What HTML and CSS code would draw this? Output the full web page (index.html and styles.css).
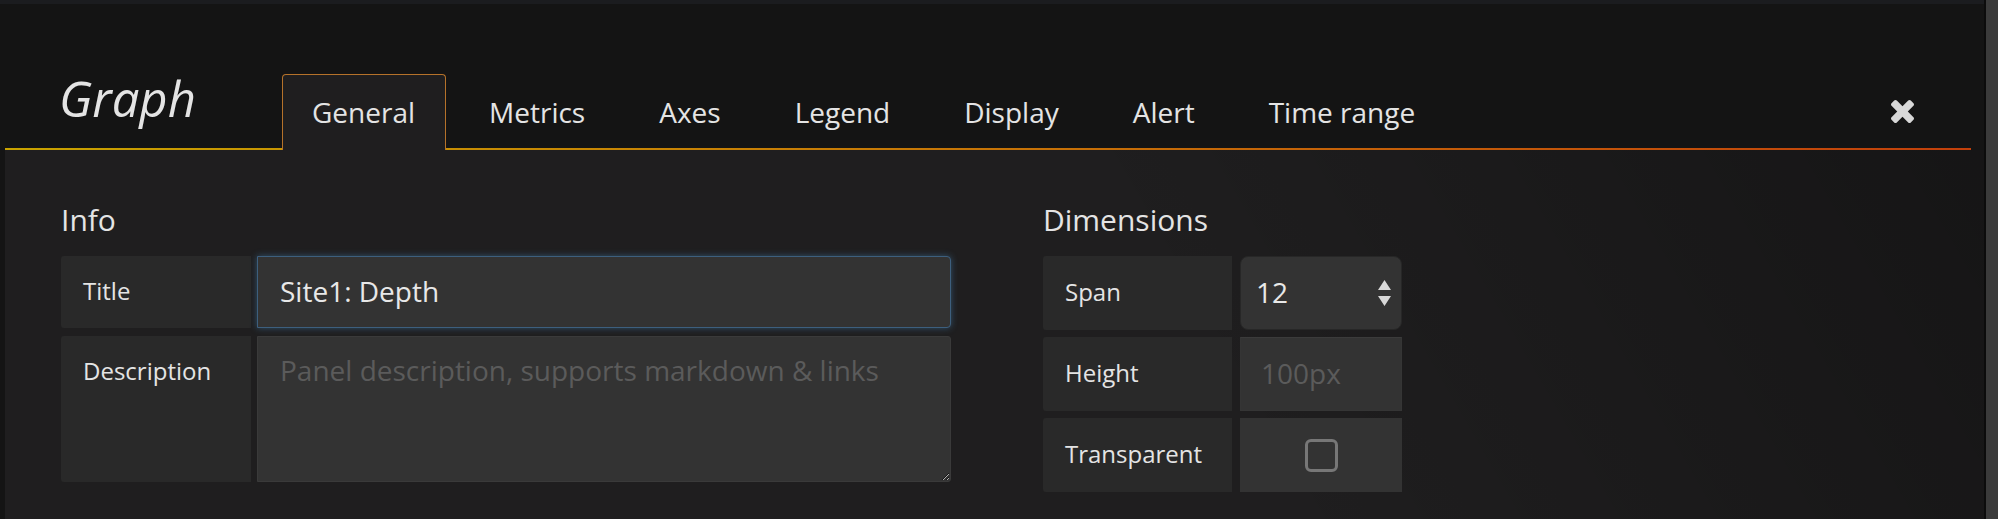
FILE: index.html
```html
<!DOCTYPE html>
<html lang="en">
<head>
<meta charset="utf-8">
<title>Graph – General</title>
<link rel="stylesheet" href="styles.css">
</head>
<body>
<div class="page">
  <div class="content">
    <div class="topbar"></div>
    <div class="editor">
      <header class="editor-header">
        <h2 class="editor-title">Graph</h2>
        <nav class="tabs">
          <a class="tab tab-active">General</a>
          <a class="tab">Metrics</a>
          <a class="tab">Axes</a>
          <a class="tab">Legend</a>
          <a class="tab">Display</a>
          <a class="tab">Alert</a>
          <a class="tab">Time range</a>
        </nav>
        <span class="close-btn" aria-label="Close">
          <svg width="23" height="23" viewBox="110 366 1188 1188"><path fill="#d8d8d8" d="M1298 1322q0 40-28 68l-136 136q-28 28-68 28t-68-28l-294-294-294 294q-28 28-68 28t-68-28l-136-136q-28-28-28-68t28-68l294-294-294-294q-28-28-28-68t28-68l136-136q28-28 68-28t68 28l294 294 294-294q28-28 68-28t68 28l136 136q28 28 28 68t-28 68l-294 294 294 294q28 28 28 68z"/></svg>
        </span>
      </header>
      <div class="editor-body">
        <section class="section section-info">
          <h5 class="section-heading">Info</h5>
          <div class="form-row">
            <label class="form-label">Title</label>
            <input class="form-input input-focus" type="text" value="Site1: Depth">
          </div>
          <div class="form-row">
            <label class="form-label">Description</label>
            <textarea class="form-textarea" placeholder="Panel description, supports markdown &amp; links"></textarea>
          </div>
        </section>
        <section class="section section-dims">
          <h5 class="section-heading">Dimensions</h5>
          <div class="form-row dims-row">
            <label class="form-label dims-label">Span</label>
            <div class="select">
              <span>12</span>
              <svg width="13" height="26" viewBox="0 0 13 26"><path fill="#d8d8d8" d="M6.5 0L13 10H0Z M0 16H13L6.5 26Z"/></svg>
            </div>
          </div>
          <div class="form-row dims-row">
            <label class="form-label dims-label">Height</label>
            <input class="dims-input" type="text" placeholder="100px">
          </div>
          <div class="form-row dims-row">
            <label class="form-label dims-label">Transparent</label>
            <div class="check-cell"><span class="checkbox"></span></div>
          </div>
        </section>
      </div>
    </div>
  </div>
  <div class="scrollbar"></div>
</div>
</body>
</html>
```

FILE: styles.css
```css
* { box-sizing: border-box; }

body {
  margin: 0;
  background: #141414;
  font-family: "Open Sans", "Liberation Sans", sans-serif;
  color: #e4e4e4;
  overflow: hidden;
}

.page {
  display: flex;
  height: 519px;
}

.content {
  flex: 1;
  min-width: 0;
  display: flex;
  flex-direction: column;
}

.topbar {
  height: 4px;
  background: #1b1c1f;
}

.editor {
  flex: 1;
  margin-left: 5px;
  display: flex;
  flex-direction: column;
}

/* header with tabs */
.editor-header {
  display: flex;
  align-items: flex-end;
  box-sizing: content-box;
  height: 144px;
  margin-right: 13px;
  padding-left: 54px;
  border-style: solid;
  border-width: 0 0 2px 0;
  border-image: linear-gradient(to right, #c9a300, #c77a06 45%, #c2400b) 1;
}

.editor-title {
  flex: none;
  width: 223px;
  margin: 0 0 22px;
  font-size: 49px;
  line-height: 56px;
  font-style: italic;
  font-weight: 400;
  color: #e4e4e4;
}

.tabs {
  display: flex;
  align-items: flex-end;
  margin-bottom: -2px;
}

.tab {
  display: block;
  font-size: 28px;
  line-height: 38px;
  padding: 18px 30px 19px 29px;
  border: 1px solid transparent;
  border-bottom: 0;
  border-radius: 4px 4px 0 0;
  margin-right: 13px;
  color: #e4e4e4;
}

.tab-active {
  border-color: #b5722a;
  background: #1f1e1f;
}

.close-btn {
  margin-left: auto;
  margin-right: 57px;
  margin-bottom: 25px;
  width: 23px;
  height: 23px;
}

.close-btn svg { display: block; }

/* body */
.editor-body {
  flex: 1;
  display: flex;
  gap: 92px;
  padding: 53px 0 0 56px;
  background: linear-gradient(60deg, rgba(0,0,0,0) 58%, rgba(0,0,0,0.3) 100%), #1f1e1f;
}

.section-info { width: 890px; }
.section-dims { width: 359px; }

.section-heading {
  margin: 0 0 20px;
  font-size: 30px;
  line-height: 33px;
  font-weight: 400;
  color: #e4e4e4;
}

.form-row {
  display: flex;
  gap: 6px;
  margin-bottom: 8px;
}

.form-label {
  flex: none;
  width: 190px;
  padding: 0 22px;
  background: #292929;
  border-radius: 3px 0 0 3px;
  font-size: 24px;
  line-height: 70px;
  color: #e4e4e4;
}

.form-input {
  flex: 1;
  min-width: 0;
  height: 72px;
  padding: 0 22px 2px;
  background: #333333;
  border: 1px solid #3d5f7e;
  border-radius: 0 4px 4px 0;
  box-shadow: 0 0 7px rgba(74, 144, 202, 0.45);
  font: 28px "Open Sans", "Liberation Sans", sans-serif;
  color: #e8e8e8;
  outline: none;
}

.form-textarea {
  flex: 1;
  min-width: 0;
  height: 146px;
  padding: 14px 22px;
  background: #333333;
  border: 1px solid #3a3a3a;
  border-radius: 0 3px 3px 0;
  font: 28px "Open Sans", "Liberation Sans", sans-serif;
  color: #e8e8e8;
  resize: vertical;
  outline: none;
}

.form-textarea::placeholder,
.dims-input::placeholder {
  color: #5b5b5b;
  opacity: 1;
}

/* dimensions */
.dims-row {
  gap: 8px;
  margin-bottom: 7px;
}

.dims-label {
  width: 189px;
  line-height: 72px;
}

.select {
  flex: 1;
  height: 74px;
  display: flex;
  align-items: center;
  justify-content: space-between;
  padding: 0 10px 2px 15px;
  background: #333333;
  border: 1px solid #272727;
  border-radius: 8px;
  font-size: 28px;
  color: #e8e8e8;
}

.select svg { display: block; margin-top: 2px; }

.dims-input {
  flex: 1;
  min-width: 0;
  height: 74px;
  padding: 0 20px 2px;
  background: #333333;
  border: 1px solid #353535;
  border-top-color: #3b3b3b;
  font: 28px "Open Sans", "Liberation Sans", sans-serif;
  color: #e8e8e8;
  outline: none;
}

.check-cell {
  flex: 1;
  height: 74px;
  display: flex;
  align-items: center;
  justify-content: center;
  background: #333333;
}

.checkbox {
  width: 33px;
  height: 33px;
  border: 3px solid #777777;
  border-radius: 6px;
}

.scrollbar {
  flex: none;
  width: 14px;
  border-left: 2px solid #0c0c0c;
  background: #3b3b3b;
}
```
